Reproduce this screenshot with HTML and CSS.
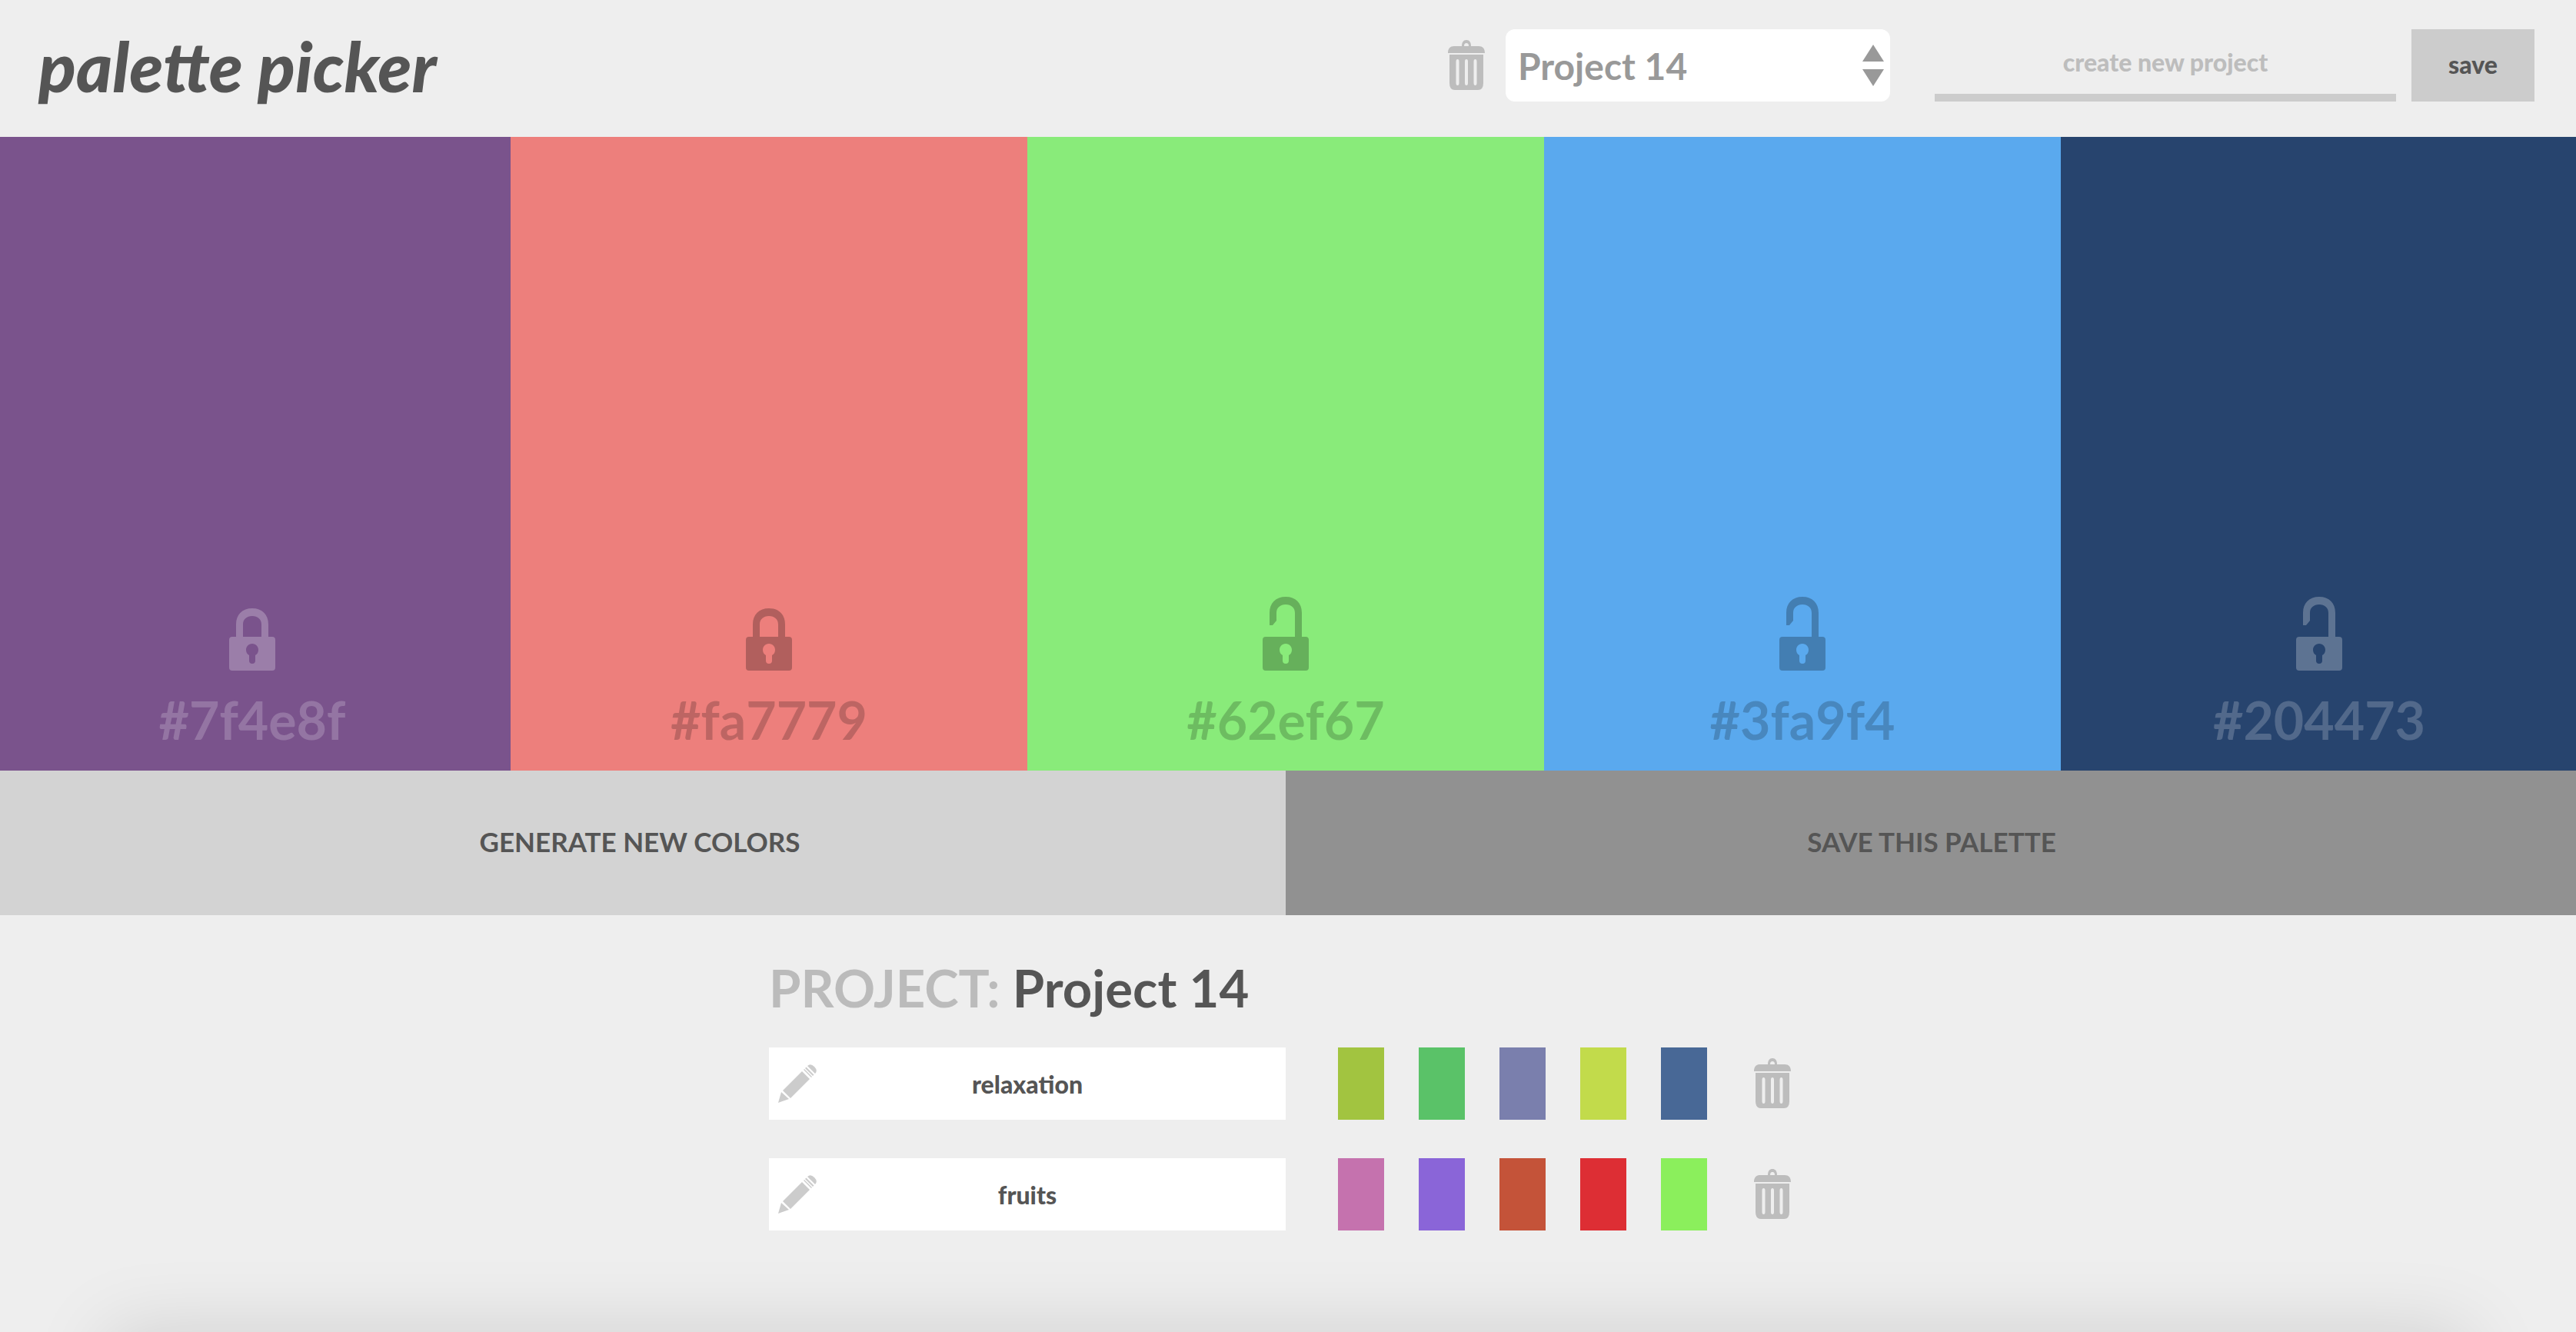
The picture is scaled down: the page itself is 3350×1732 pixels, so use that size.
FILE: index.html
```html
<!DOCTYPE html>
<html lang="en">
<head>
  <meta charset="utf-8">
  <title>Palette Picker</title>
  <link rel="stylesheet" href="styles.css">
</head>
<body>
  <svg class="sprite" aria-hidden="true">
    <symbol id="trash" viewBox="0 0 50 65">
      <path fill-rule="evenodd" d="M1 17C1 11 4 8 9 8H19C19 3 21 0 25 0S31 3 31 8H41C46 8 49 11 49 17ZM22 8H28C28 5 27 4 25 4S22 5 22 8Z"/>
      <path fill-rule="evenodd" d="M3 19H47V56Q47 65 40 65H10Q3 65 3 56ZM11.500 28V56Q11.500 59 13.500 59T15.500 56V28Q15.500 25 13.500 25T11.500 28ZM23 28V56Q23 59 25 59T27 56V28Q27 25 25 25T23 28ZM34.500 28V56Q34.500 59 36.500 59T38.500 56V28Q38.500 25 36.500 25T34.500 28Z"/>
    </symbol>
    <symbol id="keyhole-body" viewBox="0 0 60 44">
      <path fill-rule="evenodd" d="M4 0H56Q60 0 60 4V40Q60 44 56 44H4Q0 44 0 40V4Q0 0 4 0ZM30 9C25 9 22 13 22 17Q22 22 26 24V31Q26 35 30 35T34 31V24Q38 22 38 17C38 13 35 9 30 9Z"/>
    </symbol>
    <symbol id="locked" viewBox="0 0 60 96">
      <path d="M9 52V36C9 23 17 15 30 15S51 23 51 36V52H42V36C42 29 37 25 30 25S18 29 18 36V52Z"/>
      <use href="#keyhole-body" y="52" width="60" height="44"/>
    </symbol>
    <symbol id="unlocked" viewBox="0 0 60 96">
      <path d="M9 37V21C9 8 17 0 30 0S51 8 51 21V52H42V21C42 14 37 10 30 10S18 14 18 21V31L13 37Z"/>
      <use href="#keyhole-body" y="52" width="60" height="44"/>
    </symbol>
    <symbol id="pencil" viewBox="0 0 50 50">
      <path d="M0 50L4 36L14 45ZM6 34L31 9L41 19L16 44ZM33 7L34 6L44 16L43 17ZM35 5L36.500 3.500L46.500 13.500L45 15ZM38 2Q42 -2 47 3T48 12Z"/>
    </symbol>
  </svg>

  <header class="header">
    <h1 class="logo">palette picker</h1>
    <div class="project-tools">
      <button class="icon-button" type="button" aria-label="Delete project"><svg class="trash"><use href="#trash"/></svg></button>
      <div class="select-wrap">
        <select class="project-select" aria-label="Project">
          <option>Project 14</option>
        </select>
        <svg class="select-arrows" viewBox="0 0 28 54" aria-hidden="true"><path d="M14 0L28 22H0ZM0 32H28L14 54Z"/></svg>
      </div>
      <form class="new-project">
        <input class="new-project-name" type="text" placeholder="create new project" aria-label="New project name">
        <button class="save-button" type="button">save</button>
      </form>
    </div>
  </header>

  <section class="colors" aria-label="Current palette">
    <article class="color purple on-dark">
      <button class="icon-button" type="button" aria-label="Unlock color"><svg class="lock"><use href="#locked"/></svg></button>
      <h2 class="hex">#7f4e8f</h2>
    </article>
    <article class="color coral">
      <button class="icon-button" type="button" aria-label="Unlock color"><svg class="lock"><use href="#locked"/></svg></button>
      <h2 class="hex">#fa7779</h2>
    </article>
    <article class="color green">
      <button class="icon-button" type="button" aria-label="Lock color"><svg class="lock"><use href="#unlocked"/></svg></button>
      <h2 class="hex">#62ef67</h2>
    </article>
    <article class="color blue">
      <button class="icon-button" type="button" aria-label="Lock color"><svg class="lock"><use href="#unlocked"/></svg></button>
      <h2 class="hex">#3fa9f4</h2>
    </article>
    <article class="color navy on-dark">
      <button class="icon-button" type="button" aria-label="Lock color"><svg class="lock"><use href="#unlocked"/></svg></button>
      <h2 class="hex">#204473</h2>
    </article>
  </section>

  <div class="actions">
    <button class="action generate" type="button">GENERATE NEW COLORS</button>
    <button class="action save-palette" type="button">SAVE THIS PALETTE</button>
  </div>

  <main class="project">
    <h2 class="project-title"><span class="project-label">PROJECT:</span> Project 14</h2>
    <div class="palette">
      <div class="name-wrap">
        <input class="palette-name" type="text" value="relaxation" aria-label="Palette name">
        <svg class="pencil" aria-hidden="true"><use href="#pencil"/></svg>
      </div>
      <div class="swatches">
        <span class="swatch olive"></span>
        <span class="swatch emerald"></span>
        <span class="swatch periwinkle"></span>
        <span class="swatch lime"></span>
        <span class="swatch denim"></span>
      </div>
      <button class="icon-button" type="button" aria-label="Delete relaxation"><svg class="trash"><use href="#trash"/></svg></button>
    </div>
    <div class="palette">
      <div class="name-wrap">
        <input class="palette-name" type="text" value="fruits" aria-label="Palette name">
        <svg class="pencil" aria-hidden="true"><use href="#pencil"/></svg>
      </div>
      <div class="swatches">
        <span class="swatch orchid"></span>
        <span class="swatch violet"></span>
        <span class="swatch rust"></span>
        <span class="swatch red"></span>
        <span class="swatch neon"></span>
      </div>
      <button class="icon-button" type="button" aria-label="Delete fruits"><svg class="trash"><use href="#trash"/></svg></button>
    </div>
  </main>

  <div class="drawer" aria-hidden="true"></div>
</body>
</html>
```

FILE: styles.css
```css
* {
  box-sizing: border-box;
}

body {
  margin: 0;
  overflow-x: hidden;
  background: #eee;
  color: #555;
  font-family: Lato, "Liberation Sans", sans-serif;
  font-weight: 700;
}

button,
input,
select {
  margin: 0;
  padding: 0;
  border: 0;
  border-radius: 0;
  color: inherit;
  font: inherit;
}

.sprite {
  position: absolute;
  width: 0;
  height: 0;
}

.icon-button {
  display: block;
  padding-bottom: 2px;
  background: none;
  line-height: 0;
}

.trash {
  width: 50px;
  height: 65px;
  fill: #bdbdbd;
}

/* Header */
.header {
  display: flex;
  align-items: center;
  justify-content: space-between;
  height: 178px;
  padding: 0 54px 8px 50px;
}

.logo {
  margin: 0;
  font-size: 90px;
  font-style: italic;
  font-weight: 900;
  line-height: 94px;
}

.project-tools {
  display: flex;
  align-items: center;
}

.select-wrap {
  position: relative;
  margin: 0 58px 0 26px;
}

.project-select {
  display: block;
  width: 500px;
  height: 94px;
  padding: 0 16px;
  border-radius: 12px;
  background: #fff;
  color: #999;
  font-size: 48px;
  appearance: none;
}

.select-arrows {
  position: absolute;
  top: 20px;
  right: 8px;
  width: 28px;
  height: 54px;
  fill: #999;
  pointer-events: none;
}

.new-project {
  display: flex;
  gap: 20px;
}

.new-project-name {
  width: 600px;
  height: 94px;
  border-bottom: 10px solid #ccc;
  background: transparent;
  font-size: 32px;
  font-weight: 900;
  text-align: center;
}

.new-project-name::placeholder {
  color: #bdbdbd;
  opacity: 1;
}

.save-button {
  width: 160px;
  height: 94px;
  padding-bottom: 4px;
  background: #ccc;
  font-size: 32px;
  font-weight: 900;
}

/* Current palette */
.colors,
.actions {
  display: flex;
  margin: 0 -2px 0 -8px;
}

.color {
  display: flex;
  flex: 1;
  flex-direction: column;
  align-items: center;
  justify-content: flex-end;
  height: 824px;
  padding-bottom: 24px;
}

.lock {
  width: 60px;
  height: 96px;
  fill: rgba(0, 0, 0, 0.25);
}

.hex {
  margin: 20px 0 0;
  color: rgba(0, 0, 0, 0.2);
  font-size: 68px;
  line-height: 84px;
}

.on-dark .lock {
  fill: rgba(255, 255, 255, 0.25);
}

.on-dark .hex {
  color: rgba(255, 255, 255, 0.2);
}

.purple { background: #7a538c; }
.coral { background: #ed7f7c; }
.green { background: #89eb7a; }
.blue { background: #5aa9ee; }
.navy { background: #27446e; }

.action {
  flex: 1;
  height: 188px;
  padding-bottom: 4px;
  font-size: 35px;
}

.generate { background: #d3d3d3; }
.save-palette { background: #919191; }

/* Saved palettes */
.project {
  width: 1350px;
  margin: 0 auto;
  padding: 52px 0 80px;
}

.project-title {
  margin: 0 0 36px;
  font-size: 67px;
  line-height: 84px;
}

.project-label {
  color: #bbb;
}

.palette {
  display: flex;
  align-items: center;
  margin-bottom: 50px;
}

.name-wrap {
  position: relative;
}

.palette-name {
  display: block;
  width: 672px;
  height: 94px;
  background: #fff;
  font-size: 32px;
  font-weight: 900;
  text-align: center;
}

.pencil {
  position: absolute;
  top: 22px;
  left: 12px;
  width: 50px;
  height: 50px;
  fill: #ccc;
}

.swatches {
  display: flex;
  gap: 45px;
  margin: 0 60px 0 68px;
}

.swatch {
  width: 60px;
  height: 94px;
}

.olive { background: #a2c440; }
.emerald { background: #5ac268; }
.periwinkle { background: #7a7fad; }
.lime { background: #c2db4b; }
.denim { background: #486896; }
.orchid { background: #c572ae; }
.violet { background: #8a65d8; }
.rust { background: #c45339; }
.red { background: #dd2e34; }
.neon { background: #8bef5c; }

/* Drawer parked below the window; only its shadow shows */
.drawer {
  position: fixed;
  top: 100%;
  right: 140px;
  left: 140px;
  height: 300px;
  box-shadow: 0 0 100px rgba(0, 0, 0, 0.13);
}
```
